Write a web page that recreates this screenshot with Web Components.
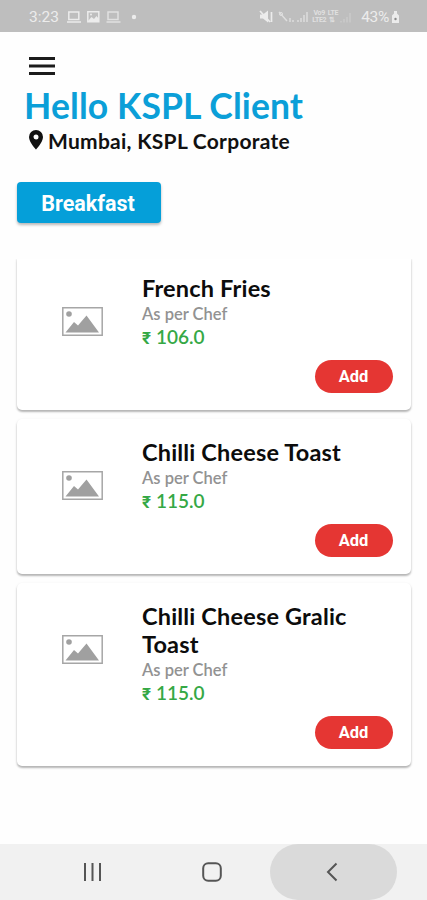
<!DOCTYPE html>
<html lang="en">
<head>
<meta charset="utf-8">
<meta name="viewport" content="width=device-width, initial-scale=1">
<title>Menu</title>
<style>
  html, body {
    margin: 0;
    height: 100%;
    background: #fefefe;
    font-family: Lato, sans-serif;
  }
</style>
</head>
<body>
<menu-app></menu-app>
<script>
const define = (name, html) => {
  customElements.define(name, class extends HTMLElement {
    constructor() {
      super();
      this.attachShadow({ mode: 'open' }).innerHTML = html;
    }
  });
};

/** System bar with the clock, signal icons and battery */
define('status-bar', `
  <style>
    :host {
      display: flex;
      align-items: center;
      box-sizing: border-box;
      height: 32px;
      padding: 2px 27px 0 29px;
      background: #bebebe;
      color: #ececec;
      font: 15.500px Roboto, sans-serif;
    }
    svg { display: block; fill: none; stroke: currentColor; }
    .time { width: 38px; }
    .grow { flex: 1; }
    .net { font-size: 7px; line-height: 7px; opacity: .75; text-align: center; font-weight: 700; letter-spacing: -.3px; }
    .pct { margin: 0 2px 0 9px; letter-spacing: -.3px; }
  </style>
  <span class="time">3:23</span>
  <svg width="72" height="16" viewBox="0 0 72 16">
    <path d="M1.8 3h10v7.500h-10zM0 13h14" stroke-width="1.500"/>
    <path d="M20.800 2.800h11v10h-11z" stroke-width="1.500"/>
    <path d="M21 12l3.500-4 2.500 2 2.500-3 2.500 3v3H21z" fill="currentColor" stroke="none"/>
    <circle cx="24" cy="5.500" r="1" fill="currentColor" stroke="none"/>
    <path d="M41 3h10v7.500H41zM39.500 13h14" stroke-width="1.500" opacity=".75"/>
    <circle cx="67" cy="8" r="2.200" fill="currentColor" stroke="none"/>
  </svg>
  <span class="grow"></span>
  <svg width="52" height="16" viewBox="0 0 52 16" overflow="visible">
    <path d="M-6 5.500h3l5-4v12l-5-4h-3z" fill="currentColor" stroke="none"/>
    <path d="M-6 2l10 11M5.500 3v10" stroke-width="1.700"/>
    <g opacity=".7">
      <circle cx="15" cy="5" r="1.600"/>
      <path d="M13 3l8 9M24 9v4M27 11v2" stroke-width="1.500"/>
      <path d="M32 11v2M35 9v4M38 6v7M41 3v10" stroke-width="1.500"/>
    </g>
  </svg>
  <span class="net" style="margin-left: -6px">Vo9<br>LTE2</span>
  <span class="net">&nbsp;LTE<br>&nbsp;&#8645;&nbsp;</span>
  <svg width="14" height="16" viewBox="0 0 14 16" opacity=".4">
    <path d="M3 12v1.500M6 10v3.500M9 8v5.500M12 4v9.500"/>
  </svg>
  <span class="pct">43%</span>
  <svg width="9" height="14" viewBox="0 0 9 14">
    <path d="M3 1h3v2.500l2 2V13H1V5.500l2-2z" fill="currentColor" stroke="none"/>
    <circle cx="4.500" cy="9" r="1.200" fill="#8b8b8b" stroke="none"/>
  </svg>
`);

/** Hamburger, greeting and current location */
define('page-header', `
  <style>
    :host { display: block; padding: 24.500px 25px 0; }
    svg { display: block; }
    .menu { margin-left: 4px; }
    h1 {
      margin: 10.500px 0 0 -1px;
      color: #0b9fd8;
      font-size: 35.500px;
      font-weight: 700;
      letter-spacing: .1px;
      line-height: 42px;
      white-space: nowrap;
    }
    .place {
      display: flex;
      align-items: center;
      gap: 5px;
      margin: 1px 0 0 4px;
      color: #111;
      font-size: 21px;
      font-weight: 700;
      letter-spacing: .27px;
      line-height: 26px;
      white-space: nowrap;
    }
    .place svg { margin-top: -2px; }
  </style>
  <svg class="menu" width="26" height="18" viewBox="0 0 26 18">
    <path d="M0 1.500h26M0 9h26M0 16.500h26" stroke="#1c1c1c" stroke-width="2.800"/>
  </svg>
  <h1><slot></slot></h1>
  <div class="place">
    <svg width="14" height="20" viewBox="0 0 14 20">
      <path d="M7 0a7 7 0 0 0-7 7c0 5.200 7 12.500 7 12.500S14 12.200 14 7a7 7 0 0 0-7-7zm0 4.500a2.500 2.500 0 1 1 0 5 2.500 2.500 0 0 1 0-5z" fill="#111"/>
    </svg>
    <slot name="place"></slot>
  </div>
`);

define('category-button', `
  <style>
    :host { display: block; margin: 28px 0 0 17px; }
    button {
      display: block;
      width: 144px;
      height: 41px;
      padding: 2px 2px 0 0;
      border: 0;
      border-radius: 4px;
      background: #059fd9;
      box-shadow: 0 2px 3px rgba(0, 0, 0, .28);
      color: #fff;
      font: 700 21.500px Roboto, sans-serif;
    }
  </style>
  <button><slot></slot></button>
`);

const itemStyle = `
  :host {
    display: grid;
    grid-template-columns: 125px 1fr;
    background: #fff;
    border-radius: 5px;
    box-shadow: 0 2px 2px rgba(0, 0, 0, .24), 0 1px 3px rgba(0, 0, 0, .1);
  }
  .thumb { margin: 52px 0 0 45px; }
  .info { padding: 19px 18px 17px 0; }
  h2 {
    margin: 0;
    color: #0c0c0c;
    font-size: 23.500px;
    font-weight: 700;
    letter-spacing: .17px;
    line-height: 28px;
  }
  .note {
    margin-top: 2px;
    color: #929292;
    font-size: 16.500px;
    font-weight: 600;
    line-height: 20px;
  }
  .price {
    color: #35a845;
    font-size: 19px;
    font-weight: 600;
    line-height: 26px;
  }
  .rupee {
    display: inline-block;
    width: 14px;
    font: 700 17px Roboto, sans-serif;
    line-height: 20px;
  }
  button {
    display: block;
    width: 78px;
    height: 33px;
    margin: 10px 0 0 auto;
    padding: 0 1px 0 0;
    border: 0;
    border-radius: 17px;
    background: #e53633;
    color: #fff;
    font: 700 16.500px Roboto, sans-serif;
  }
`;

/** One dish: name, note and price come from attributes */
class MenuItem extends HTMLElement {
  constructor() {
    super();
    this._shadowRoot = this.attachShadow({ mode: 'open' });
  }

  connectedCallback() {
    this._render();
  }

  _render() {
    this._shadowRoot.innerHTML = `
      <style>${itemStyle}</style>
      <svg class="thumb" width="41" height="29" viewBox="0 0 41 29">
        <path d="M.8.8h39.400v27.400H.8z" fill="#fff" stroke="#a6a6a6" stroke-width="1.500"/>
        <circle cx="7" cy="7" r="2.800" fill="#a0a0a0"/>
        <path d="M3.500 25.500L12 15l4 3.500 8.500-10L37 25.500z" fill="#a0a0a0"/>
      </svg>
      <div class="info">
        <h2>${this.getAttribute('name')}</h2>
        <div class="note">${this.getAttribute('note')}</div>
        <div class="price"><span class="rupee">&#8377;</span>${this.getAttribute('price')}</div>
        <button>Add</button>
      </div>
    `;
  }
}
customElements.define('menu-item', MenuItem);

/** Scrolling list, cuts the top edge of the first card */
define('menu-list', `
  <style>
    :host {
      display: flex;
      flex-direction: column;
      gap: 9px;
      margin-top: 32px;
      padding: 0 16px 0 17px;
      flex: 1;
      min-height: 0;
      clip-path: inset(4px 0 0 0);
    }
  </style>
  <slot></slot>
`);

/** Android navigation buttons, back is pressed */
define('nav-bar', `
  <style>
    :host {
      display: grid;
      grid-template-columns: 33px 119px 118px 127px 1fr;
      height: 56px;
      background: #f1f1f1;
    }
    div { display: grid; place-items: center; }
    .home { padding-left: 1px; }
    .back { padding-right: 4px; border-radius: 28px; background: #dadada; }
    svg { fill: none; stroke: #555; stroke-width: 2; }
  </style>
  <span></span>
  <div><svg width="20" height="20" viewBox="0 0 20 20"><path d="M2 1v18M9.500 1v18M17 1v18"/></svg></div>
  <div class="home"><svg width="20" height="20" viewBox="0 0 20 20"><rect x="1.200" y="1.200" width="17.600" height="17.600" rx="5"/></svg></div>
  <div class="back"><svg width="12" height="20" viewBox="0 0 12 20"><path d="M10.500 1.500L2 10l8.500 8.500"/></svg></div>
`);

define('menu-app', `
  <style>
    :host { display: flex; flex-direction: column; height: 100vh; overflow: hidden; }
  </style>
  <status-bar></status-bar>
  <page-header>Hello KSPL Client<span slot="place">Mumbai, KSPL Corporate</span></page-header>
  <category-button>Breakfast</category-button>
  <menu-list>
    <menu-item name="French Fries" note="As per Chef" price="106.0"></menu-item>
    <menu-item name="Chilli Cheese Toast" note="As per Chef" price="115.0"></menu-item>
    <menu-item name="Chilli Cheese Gralic Toast" note="As per Chef" price="115.0"></menu-item>
  </menu-list>
  <nav-bar></nav-bar>
`);
</script>
</body>
</html>
